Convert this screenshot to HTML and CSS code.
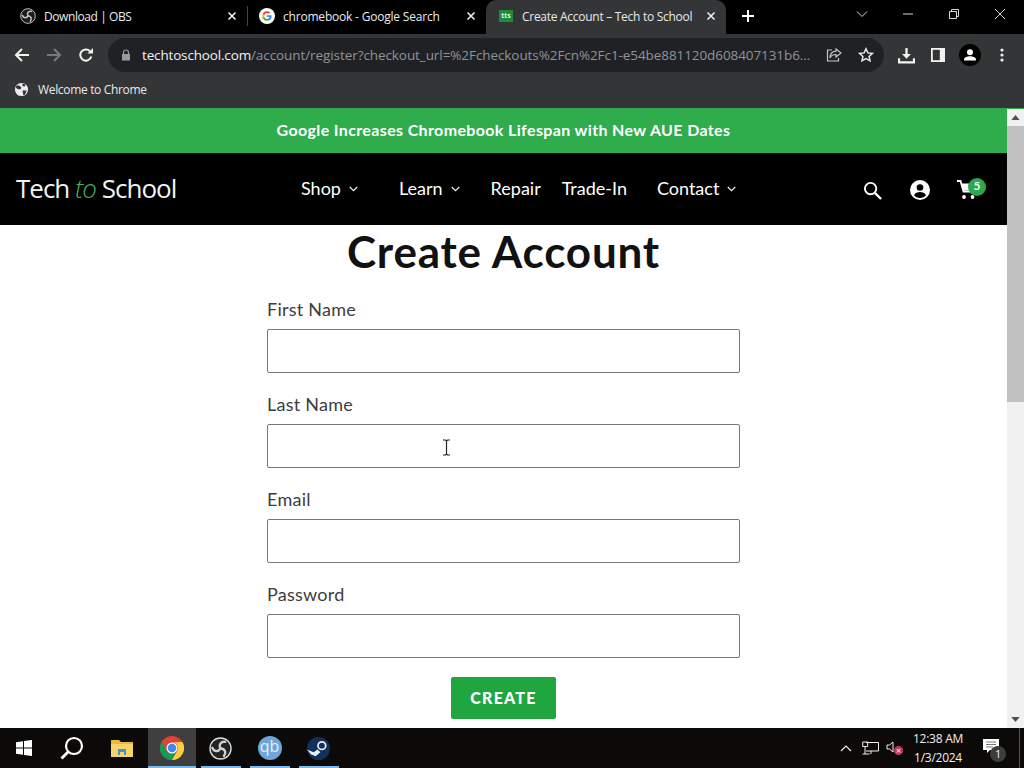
FILE: index.html
```html
<!DOCTYPE html>
<html lang="en">
<head>
<meta charset="utf-8">
<title>Create Account – Tech to School</title>
<link rel="stylesheet" href="styles.css">
</head>
<body>
<div class="tabstrip">
  <div class="tab tab-obs">
    <svg class="favicon" viewBox="0 0 24 24"><circle cx="12" cy="12" r="11" fill="#1c1c1c" stroke="#c8c8c8" stroke-width="1.400"/><g fill="none" stroke="#c0c0c0" stroke-width="2.400" stroke-linecap="round"><path d="M12 12C10 8 12 4.500 17 5"/><path d="M12 12C10 8 12 4.500 17 5" transform="rotate(120 12 12)"/><path d="M12 12C10 8 12 4.500 17 5" transform="rotate(240 12 12)"/></g></svg>
    <span class="tab-title tt-obs">Download | OBS</span>
    <svg class="tab-close" viewBox="0 0 10 10"><path d="M1.500 1.500l7 7M8.500 1.500l-7 7"/></svg>
  </div>
  <div class="tab-sep"></div>
  <div class="tab tab-google">
    <svg class="favicon" viewBox="0 0 16 16"><circle cx="8" cy="8" r="8" fill="#fff"/><path d="M12.600 8.200c0-.4 0-.7-.1-1H8v1.800h2.600c-.1.600-.5 1.100-1 1.500v1.200h1.600c1-.9 1.400-2.100 1.400-3.500z" fill="#4285f4"/><path d="M8 12.800c1.300 0 2.400-.4 3.200-1.200l-1.600-1.200c-.4.300-1 .5-1.600.5-1.200 0-2.300-.8-2.700-2H3.700v1.300A4.800 4.800 0 0 0 8 12.800z" fill="#34a853"/><path d="M5.300 8.900a3 3 0 0 1 0-1.800V5.800H3.700a4.800 4.800 0 0 0 0 4.400z" fill="#fbbc05"/><path d="M8 5.100c.7 0 1.300.2 1.800.7l1.400-1.400A4.800 4.800 0 0 0 3.700 5.800l1.600 1.300c.4-1.200 1.500-2 2.700-2z" fill="#ea4335"/></svg>
    <span class="tab-title tt-google">chromebook - Google Search</span>
    <svg class="tab-close" viewBox="0 0 10 10"><path d="M1.500 1.500l7 7M8.500 1.500l-7 7"/></svg>
  </div>
  <div class="tab tab-active">
    <span class="tts-icon">tts</span>
    <span class="tab-title tt-active">Create Account – Tech to School</span>
    <svg class="tab-close" viewBox="0 0 10 10"><path d="M1.500 1.500l7 7M8.500 1.500l-7 7"/></svg>
  </div>
  <svg class="new-tab" viewBox="0 0 12 12"><path d="M6 0v12M0 6h12"/></svg>
  <div class="window-controls">
    <svg viewBox="0 0 12 12"><path d="M1 3.500l5 5 5-5"/></svg>
    <svg viewBox="0 0 12 12"><path d="M1 6h10"/></svg>
    <svg viewBox="0 0 12 12"><path d="M1.500 3.500h7v7h-7zM3.500 3.500v-2h7v7h-2"/></svg>
    <svg viewBox="0 0 12 12"><path d="M1 1l10 10M11 1L1 11"/></svg>
  </div>
</div>

<div class="toolbar">
  <svg class="nav-icon" viewBox="0 0 16 16"><path d="M15 8H2M8 2L2 8l6 6" fill="none" stroke="#f1f1f1" stroke-width="2"/></svg>
  <svg class="nav-icon" viewBox="0 0 16 16"><path d="M1 8h13M8 2l6 6-6 6" fill="none" stroke="#77797a" stroke-width="2"/></svg>
  <svg class="nav-icon" viewBox="0 0 16 16"><path d="M13.300 9.500A5.600 5.600 0 1 1 12 4.200" fill="none" stroke="#f1f1f1" stroke-width="2"/><path d="M9.500 6.500H15V1z" fill="#f1f1f1"/></svg>
  <div class="omnibox">
    <svg class="lock" viewBox="0 0 10 12"><path d="M2.500 5V3.500a2.500 2.500 0 0 1 5 0V5" fill="none" stroke="#9a9b9d" stroke-width="1.200"/><rect x="1" y="5" width="8" height="6.500" fill="#9a9b9d"/></svg>
    <div class="url"><span class="url-host">techtoschool.com</span>/account/register?checkout_url=%2Fcheckouts%2Fcn%2Fc1-e54be881120d608407131b6...</div>
    <svg class="omni-share" viewBox="0 0 16 16"><path d="M10 2l5 4-5 4V7.500C7 7.500 5 8.500 4 11c0-4 2-6.500 6-6.800zM6 3H1.500v11h11v-3" fill="none" stroke="#c4c7c5" stroke-width="1.200"/></svg>
    <svg class="omni-star" viewBox="0 0 16 16"><path d="M8 1.800l1.900 4.100 4.500.5-3.300 3 .9 4.400L8 11.600l-4 2.200.9-4.400-3.300-3 4.500-.5z" fill="none" stroke="#e6e6e6" stroke-width="1.500"/></svg>
  </div>
  <div class="toolbar-actions">
    <svg class="act act-dl" viewBox="0 0 16 16"><path d="M8 1v7.500" stroke="#f1f1f1" stroke-width="2.200"/><path d="M3.800 6.500h8.400L8 11z" fill="#f1f1f1"/><path d="M1 10.500v4h14v-4" fill="none" stroke="#f1f1f1" stroke-width="2"/></svg>
    <svg class="act act-side" viewBox="0 0 14 14"><rect width="14" height="14" fill="#f1f1f1"/><rect x="1.800" y="1.800" width="7" height="10.400" fill="#333536"/></svg>
    <svg class="act act-user" viewBox="0 0 22 22"><circle cx="11" cy="11" r="11" fill="#000"/><circle cx="11" cy="8.300" r="3" fill="#fff"/><path d="M5 15.500c0-2.300 3.500-3.300 6-3.300s6 1 6 3.300V16.500H5z" fill="#fff"/></svg>
    <svg class="act act-menu" viewBox="0 0 4 14"><circle cx="2" cy="2" r="1.600" fill="#f1f1f1"/><circle cx="2" cy="7" r="1.600" fill="#f1f1f1"/><circle cx="2" cy="12" r="1.600" fill="#f1f1f1"/></svg>
  </div>
</div>

<div class="bookmarks">
  <svg class="bm-icon" viewBox="0 0 16 16"><circle cx="8" cy="8" r="7" fill="#eee"/><path d="M3 3.500l3 .5 2 2-1.500 2-2.500-.5L1.800 6zM9 1.500l3.500 1.500-1.500 2-2-1zM9 9h4.500l-1.800 4.500-1.700.5z" fill="#35363a"/></svg>
  <span>Welcome to Chrome</span>
</div>

<div class="viewport">
  <div class="page">
    <div class="announcement">Google Increases Chromebook Lifespan with New AUE Dates</div>
    <header class="site-header">
      <div class="logo">Tech <em>to</em> School</div>
      <nav class="site-nav">
        <a class="nav-item nav-shop">Shop <svg class="chev" viewBox="0 0 8 5"><path d="M.7.700L4 4 7.300.700"/></svg></a>
        <a class="nav-item nav-learn">Learn <svg class="chev" viewBox="0 0 8 5"><path d="M.7.700L4 4 7.300.700"/></svg></a>
        <a class="nav-item nav-repair">Repair</a>
        <a class="nav-item nav-trade">Trade-In</a>
        <a class="nav-item">Contact <svg class="chev" viewBox="0 0 8 5"><path d="M.7.700L4 4 7.300.700"/></svg></a>
      </nav>
      <div class="header-icons">
        <svg class="hi-search" viewBox="0 0 20 20"><circle cx="8" cy="8" r="6" fill="none" stroke="#fff" stroke-width="2"/><path d="M12.500 12.500L19 19" stroke="#fff" stroke-width="2.400"/></svg>
        <svg class="hi-user" viewBox="0 0 20 20"><circle cx="10" cy="10" r="10" fill="#fff"/><circle cx="10" cy="7.500" r="3.300" fill="#000"/><path d="M4 15.300c1-2.300 3.500-3.300 6-3.300s5 1 6 3.300c-1.500 1.800-3.700 2.700-6 2.700s-4.500-.9-6-2.700z" fill="#000"/></svg>
        <div class="cart">
          <svg class="hi-cart" viewBox="0 0 20 20"><path d="M0 1h3.500l3 10.500h10" fill="none" stroke="#fff" stroke-width="1.800"/><path d="M4.500 3.500H19l-3 7H6.500z" fill="#fff"/><circle cx="7" cy="17" r="1.900" fill="#fff"/><circle cx="15.500" cy="17" r="1.900" fill="#fff"/></svg>
          <span class="cart-count">5</span>
        </div>
      </div>
    </header>
    <main class="register">
      <h1>Create Account</h1>
      <form class="form">
        <label class="field"><span>First Name</span><input type="text"></label>
        <label class="field"><span>Last Name</span><input type="text"></label>
        <label class="field"><span>Email</span><input type="text"></label>
        <label class="field"><span>Password</span><input type="text"></label>
        <button type="button" class="create">CREATE</button>
      </form>
    </main>
    <svg class="ibeam" viewBox="0 0 9 17"><path d="M1 1h2.500l1 1 1-1H8M4.500 2v13M1 16h2.500l1-1 1 1H8" fill="none" stroke="#222" stroke-width="1.200"/></svg>
  </div>
  <div class="scrollbar">
    <div class="sb-arrow"><svg viewBox="0 0 10 6"><path d="M5 0l5 6H0z"/></svg></div>
    <div class="sb-track"><div class="sb-thumb"></div></div>
    <div class="sb-arrow"><svg viewBox="0 0 10 6"><path d="M0 0h10L5 6z"/></svg></div>
  </div>
</div>

<footer class="taskbar">
  <div class="task task-start"><svg viewBox="0 0 16 16" class="win"><path d="M0 2.200l7-1v6.300H0zM8 1l8-1.100V7.500H8zM0 8.500h7v6.300l-7-1zM8 8.500h8V16l-8-1.100z" fill="#fff"/></svg></div>
  <div class="task task-search"><svg viewBox="0 0 24 24" class="ts-search"><circle cx="14" cy="10" r="8" fill="none" stroke="#fff" stroke-width="2.200"/><path d="M8 16l-6.500 6.500" stroke="#fff" stroke-width="2.800"/></svg></div>
  <div class="task task-folder"><svg viewBox="0 0 22 18" class="ts-folder"><path d="M0 1h8l2 2h12v15H0z" fill="#e8b83f"/><path d="M0 5h22v13H0z" fill="#f6d469"/><rect x="7" y="10" width="8" height="6" fill="#4a90d0"/><rect x="9" y="13" width="4" height="3" fill="#f6d469"/></svg></div>
  <div class="task task-on underline"><svg viewBox="0 0 24 24" class="ts-chrome"><circle cx="12" cy="12" r="12" fill="#db4437"/><path d="M1.600 6A12 12 0 0 0 12 24l5.200-9-5.200 3a6 6 0 0 1-5.200-3z" fill="#0f9d58"/><path d="M12 24A12 12 0 0 0 22.400 6H12a6 6 0 0 1 5.200 9z" fill="#ffcd40"/><circle cx="12" cy="12" r="5.500" fill="#fff"/><circle cx="12" cy="12" r="4.300" fill="#4285f4"/></svg></div>
  <div class="task underline"><svg viewBox="0 0 24 24" class="ts-round"><circle cx="12" cy="12" r="11" fill="#222" stroke="#ddd" stroke-width="1.400"/><g fill="none" stroke="#d0d0d0" stroke-width="2.400" stroke-linecap="round"><path d="M12 12C10 8 12 4.500 17 5"/><path d="M12 12C10 8 12 4.500 17 5" transform="rotate(120 12 12)"/><path d="M12 12C10 8 12 4.500 17 5" transform="rotate(240 12 12)"/></g></svg></div>
  <div class="task underline"><div class="qb">qb</div></div>
  <div class="task underline"><svg viewBox="0 0 24 24" class="ts-round"><circle cx="12" cy="12" r="12" fill="#12305a"/><circle cx="15.500" cy="9" r="4" fill="none" stroke="#e8eef5" stroke-width="1.800"/><path d="M0 13l7 3 4-3 3 3-5 4-5-2z" fill="#e8eef5"/></svg></div>
  <div class="tray">
    <svg class="tray-up" viewBox="0 0 12 7"><path d="M1 6l5-5 5 5"/></svg>
    <svg class="tray-net" viewBox="0 0 17 14"><path d="M4 1.500h12.500v8.500H4M.7 1h5v4.500h-5zM3 5.500V13M.5 13h7M9 10v3"/></svg>
    <div class="tray-vol">
      <svg viewBox="0 0 8 12"><path d="M7 1v10L3.500 8H1V4h2.500z"/></svg>
      <span class="vol-x">×</span>
    </div>
    <div class="clock"><span>12:38 AM</span><span>1/3/2024</span></div>
    <div class="notif">
      <svg viewBox="0 0 16 15"><path d="M0 0h16v11H7l-3 3v-3H0z" fill="#fff"/><path d="M3 3h10M3 5.500h10M3 8h7" stroke="#555" stroke-width=".8"/></svg>
      <span class="notif-count">1</span>
    </div>
    <div class="show-desktop"></div>
  </div>
</footer>
</body>
</html>
```

FILE: styles.css
```css
* { box-sizing: border-box; }
html, body { margin: 0; padding: 0; }
body {
  width: 1024px;
  height: 768px;
  overflow: hidden;
  display: flex;
  flex-direction: column;
  background: #fff;
  font-family: "Open Sans", "Liberation Sans", sans-serif;
}
svg { display: block; flex: none; }

/* Tab strip */
.tabstrip {
  height: 34px;
  flex: none;
  display: flex;
  align-items: center;
  background: #000;
  color: #e8eaed;
  font-size: 12px;
}
.tab {
  height: 34px;
  display: flex;
  align-items: center;
  flex: none;
  padding-bottom: 2px;
}
.tab-obs { width: 247px; padding-left: 20px; padding-right: 10px; }
.tab-sep { width: 1px; height: 20px; margin-bottom: 2px; background: #444; flex: none; }
.tab-google { width: 238px; padding-left: 11px; padding-right: 10px; }
.tab-active {
  width: 240px;
  padding-left: 13px;
  padding-right: 10px;
  background: #333536;
  border-radius: 10px 10px 0 0;
}
.favicon { width: 16px; height: 16px; margin-right: 8px; }
.tab-title { flex: 1; white-space: nowrap; overflow: hidden; }
.tt-obs { letter-spacing: -.42px; }
.tt-google { letter-spacing: -.2px; }
.tt-active { letter-spacing: -.28px; }
.tab-close { width: 10px; height: 10px; }
.tab-close path { stroke: #eee; stroke-width: 1.600; fill: none; }
.tts-icon {
  width: 14px;
  height: 12px;
  margin-right: 9px;
  background: #1f8a3a;
  color: #cfe;
  font-size: 7px;
  line-height: 11px;
  text-align: center;
  font-weight: 700;
}
.new-tab { width: 12px; height: 12px; margin-left: 16px; margin-bottom: 2px; }
.new-tab path { stroke: #fff; stroke-width: 2; fill: none; }
.window-controls {
  margin-left: auto;
  display: flex;
  align-items: center;
  gap: 34px;
  padding: 0 18px 6px 0;
}
.window-controls svg { width: 12px; height: 12px; }
.window-controls path { stroke: #d8d8d8; stroke-width: 1; fill: none; }

/* Toolbar */
.toolbar {
  height: 38px;
  flex: none;
  display: flex;
  align-items: center;
  background: #333536;
  padding: 4px 0 0 14px;
}
.nav-icon { width: 16px; height: 16px; margin-right: 16px; }
.omnibox {
  width: 776px;
  height: 34px;
  margin-left: -2px;
  flex: none;
  display: flex;
  align-items: center;
  border-radius: 17px;
  background: #202124;
  padding-left: 13px;
  font-size: 13.500px;
  color: #8f9499;
}
.lock { width: 10px; height: 12px; margin-right: 11px; }
.url { width: 670px; flex: none; white-space: nowrap; overflow: hidden; letter-spacing: -.08px; }
.url-host { color: #f1f3f4; letter-spacing: -.16px; }
.omni-share { width: 16px; height: 16px; margin-left: 14px; }
.omni-star { width: 16px; height: 16px; margin-left: 16px; }
.toolbar-actions { display: flex; align-items: center; }
.act-dl { width: 17px; height: 17px; margin-left: 14px; }
.act-side { width: 14px; height: 14px; margin-left: 16px; }
.act-user { width: 22px; height: 22px; margin-left: 14px; }
.act-menu { width: 4px; height: 14px; margin-left: 19px; }

/* Bookmarks */
.bookmarks {
  height: 36px;
  flex: none;
  display: flex;
  align-items: center;
  gap: 9px;
  padding: 0 0 2px 14px;
  background: #333536;
  color: #e8eaed;
  font-size: 12px;
  letter-spacing: -.33px;
}
.bm-icon { width: 15px; height: 15px; }

/* Viewport */
.viewport { flex: 1; min-height: 0; display: flex; border-top: 1px solid #2ea84a; }
.page {
  position: relative;
  flex: 1;
  min-width: 0;
  overflow: hidden;
  font-family: Lato, "Open Sans", sans-serif;
}
.announcement {
  height: 44px;
  background: #2fac4c;
  color: #fff;
  font-weight: 700;
  font-size: 16px;
  letter-spacing: .36px;
  line-height: 42px;
  text-align: center;
}
.site-header {
  height: 72px;
  background: #000;
  color: #fff;
  display: flex;
  align-items: center;
  padding-left: 16px;
}
.logo {
  width: 285px;
  flex: none;
  margin-bottom: 3px;
  font-family: "Open Sans", sans-serif;
  font-size: 26px;
  letter-spacing: -1px;
  color: #f2f2f2;
}
.logo em { color: #4bae62; font-weight: 300; }
.site-nav { display: flex; align-items: center; font-size: 18px; margin-bottom: 3px; }
.nav-item { display: flex; align-items: center; gap: 8px; white-space: nowrap; }
.nav-shop { margin-right: 41px; }
.nav-learn { margin-right: 31px; }
.nav-repair { margin-right: 21px; }
.nav-trade { margin-right: 30px; }
.chev { width: 9px; height: 6px; margin-top: 3px; }
.chev path { fill: none; stroke: #eee; stroke-width: 1.100; }
.header-icons { margin-left: auto; display: flex; align-items: center; padding: 2px 30px 0 0; }
.hi-search { width: 19px; height: 19px; }
.hi-user { width: 20px; height: 20px; margin-left: 28px; }
.cart { position: relative; width: 20px; height: 20px; margin-left: 27px; }
.hi-cart { width: 20px; height: 20px; }
.cart-count {
  position: absolute;
  left: 11px;
  top: -2px;
  width: 18px;
  height: 18px;
  border-radius: 50%;
  background: #2fa84b;
  color: #dfe;
  font-size: 12px;
  font-weight: 700;
  line-height: 16px;
  text-align: center;
}

/* Register form */
.register { display: flex; flex-direction: column; align-items: center; }
.register h1 {
  margin: 0;
  height: 61px;
  font-size: 44px;
  line-height: 52px;
  font-weight: 700;
  color: #111;
  letter-spacing: .8px;
}
.form { width: 473px; padding-top: 11px; display: flex; flex-direction: column; }
.field { display: flex; flex-direction: column; margin-bottom: 19px; }
.field span { height: 24px; margin-bottom: 8px; font-size: 18px; line-height: 24px; color: #3d3d3d; letter-spacing: .25px; }
.field input {
  height: 44px;
  border: 1px solid #777;
  border-radius: 2px;
  background: #fff;
}
.create {
  align-self: center;
  width: 105px;
  height: 42px;
  padding: 0 0 2px;
  border: 0;
  border-radius: 2px;
  background: #1fa63f;
  color: #fff;
  font-family: Lato, sans-serif;
  font-size: 16px;
  font-weight: 900;
  letter-spacing: 1.200px;
}
.ibeam { position: absolute; left: 442px; top: 330px; width: 9px; height: 17px; }

/* Scrollbar */
.scrollbar { width: 17px; flex: none; display: flex; flex-direction: column; background: #f1f1f1; }
.sb-arrow { height: 17px; flex: none; display: flex; align-items: center; justify-content: center; }
.sb-arrow svg { width: 9px; height: 5px; fill: #505050; }
.sb-track { flex: 1; }
.sb-thumb { height: 276px; background: #c1c1c1; }

/* Taskbar */
.taskbar {
  height: 40px;
  flex: none;
  display: flex;
  align-items: center;
  background: #0c0a09;
  color: #fff;
}
.task {
  width: 49px;
  height: 40px;
  flex: none;
  display: flex;
  align-items: center;
  justify-content: center;
  position: relative;
}
.task-start { width: 48px; }
.task-search { width: 48px; }
.task-folder { width: 52px; }
.task-on { width: 48px; background: #3f3f3f; }
.underline::after {
  content: "";
  position: absolute;
  left: 5px;
  right: 4px;
  bottom: 0;
  height: 2px;
  background: #76b9ed;
}
.task-on.underline::after { left: 0; right: 0; }
.win { width: 16px; height: 16px; }
.ts-search { width: 24px; height: 24px; }
.ts-folder { width: 22px; height: 18px; }
.ts-chrome { width: 24px; height: 24px; }
.ts-round { width: 23px; height: 23px; }
.qb {
  width: 24px;
  height: 24px;
  border-radius: 50%;
  background: #6ea6dc;
  color: #e6f0fa;
  font-size: 16px;
  line-height: 21px;
  text-align: center;
}
.tray { margin-left: auto; height: 40px; display: flex; align-items: center; }
.tray-up { width: 12px; height: 7px; margin-right: 10px; }
.tray-up path { fill: none; stroke: #eee; stroke-width: 1.200; }
.tray-net { width: 17px; height: 14px; margin-right: 7px; }
.tray-net path { fill: none; stroke: #eee; stroke-width: 1; }
.tray-vol { position: relative; width: 17px; height: 14px; margin-right: 8px; }
.tray-vol svg { width: 8px; height: 12px; }
.tray-vol path { fill: none; stroke: #eee; stroke-width: 1; }
.vol-x {
  position: absolute;
  left: 8px;
  top: 5px;
  width: 9px;
  height: 9px;
  border-radius: 50%;
  background: #c8375a;
  font-size: 9px;
  line-height: 9px;
  text-align: center;
}
.clock {
  width: 54px;
  display: flex;
  flex-direction: column;
  align-items: center;
  font-size: 12px;
  line-height: 19px;
  letter-spacing: -.25px;
  color: #eee;
  margin-right: 18px;
}
.notif { position: relative; width: 16px; height: 15px; margin-right: 20px; margin-bottom: 3px; }
.notif svg { width: 16px; height: 15px; }
.notif-count {
  position: absolute;
  left: 7px;
  top: 7px;
  width: 16px;
  height: 16px;
  border-radius: 50%;
  background: #3d3d3d;
  font-size: 10px;
  line-height: 16px;
  text-align: center;
}
.show-desktop { width: 1px; height: 40px; background: #555; margin-right: 4px; }
```
